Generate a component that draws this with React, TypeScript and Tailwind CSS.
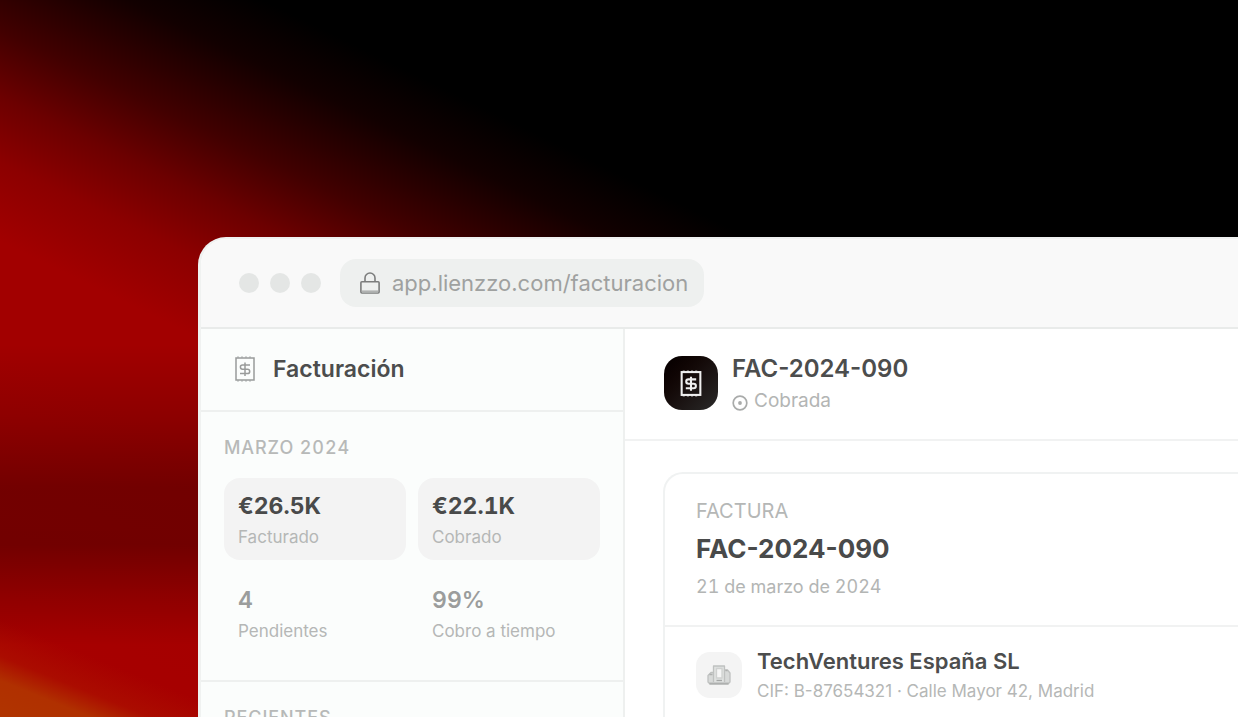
import type { ReactNode } from "react";

type Stat = { value: string; label: string; highlighted: boolean };

const stats: Stat[] = [
  { value: "€26.5K", label: "Facturado", highlighted: true },
  { value: "€22.1K", label: "Cobrado", highlighted: true },
  { value: "4", label: "Pendientes", highlighted: false },
  { value: "99%", label: "Cobro a tiempo", highlighted: false },
];

function LockIcon() {
  return (
    <svg className="h-6 w-5" viewBox="0 0 20 24" fill="none" stroke="#7c7d7d" strokeWidth="1.6" aria-hidden="true">
      <path d="M5 11V7a5 5 0 0 1 10 0v4" />
      <rect x="0.9" y="10.8" width="18.2" height="11.2" rx="1" />
      <path d="M2 20.6h16" stroke="#b0b2b1" strokeWidth="2.4" />
    </svg>
  );
}

function ReceiptIcon({ className, strokeWidth }: { className: string; strokeWidth: number }) {
  return (
    <svg className={className} viewBox="0 0 20 26" fill="none" stroke="currentColor" strokeWidth={strokeWidth} aria-hidden="true">
      <rect x="1" y="2" width="18" height="22" />
      <path d="M2 1h16M2 25h16" strokeWidth="1.2" strokeDasharray="2 2" opacity="0.7" />
      <path d="M15 9H7.500a2 2 0 0 0 0 4.200h5a2.200 2.200 0 0 1 0 4.400H5M10 6.500v13.500" />
    </svg>
  );
}

function StatusIcon() {
  return (
    <svg className="mt-1 h-4 w-4" viewBox="0 0 16 16" aria-hidden="true">
      <circle cx="8" cy="8" r="6.8" fill="none" stroke="#a9abaa" strokeWidth="1.7" />
      <circle cx="8" cy="8" r="1.9" fill="#a9abaa" />
    </svg>
  );
}

function BuildingIcon() {
  return (
    <svg className="h-5 w-6" viewBox="0 0 24 20" fill="none" stroke="#bfc1c0" strokeWidth="1.3" strokeLinejoin="round" aria-hidden="true">
      <path d="M6.5 7.500H4L1 10.500V17l2 2h18l2-2V8L20.500 5H17.500" fill="#d8dad9" />
      <path d="M6.500 17V1h11v16" fill="#dfe1e0" />
      <path d="M9.500 3.500h5.500v9.500H9.500z" fill="#f6f6f6" stroke="#cfd1d0" />
      <path d="M9.500 15.500h5.500" stroke="#a4a6a5" />
      <path d="M18.500 5.500h2M2.500 9.500h3" stroke="#aeb0af" />
      <path d="M2.500 18.500h19" stroke="#aeb0af" strokeWidth="1.8" />
    </svg>
  );
}

function SectionLabel({ children }: { children: ReactNode }) {
  return <h2 className="text-[18px] leading-6 font-medium tracking-wider text-[#b7b9b8] tabular-nums">{children}</h2>;
}

function StatCard({ value, label, highlighted }: Stat) {
  return (
    <div className={highlighted ? "rounded-2xl bg-[#f3f3f3] px-[14px] pt-3 pb-[10px]" : "px-[14px] pt-3 pb-[10px]"}>
      <p
        className={
          highlighted
            ? "text-[23px] leading-8 font-bold text-[#494a4a] tabular-nums"
            : "text-[23px] leading-8 font-semibold text-[#9b9d9c] tabular-nums"
        }
      >
        {value}
      </p>
      <p className="mt-[2px] text-[17px] leading-[26px] text-[#b5b7b6]">{label}</p>
    </div>
  );
}

function Sidebar() {
  return (
    <aside className="w-[424px] shrink-0 border-r-2 border-[#eef0ef] bg-[#fbfdfc]">
      <header className="flex h-[83px] items-center gap-[18px] border-b-2 border-[#eef0ef] px-[34px] pb-[2px]">
        <ReceiptIcon className="h-[26px] w-5 text-[#999b9a]" strokeWidth={1.5} />
        <h1 className="text-[23px] leading-8 font-semibold text-[#4c4d4d]">Facturación</h1>
      </header>
      <section className="border-b-2 border-[#eef0ef] px-[23px] pt-6 pb-[26px]">
        <SectionLabel>MARZO 2024</SectionLabel>
        <div className="mt-[18px] grid grid-cols-2 gap-3">
          {stats.map((stat) => (
            <StatCard key={stat.label} {...stat} />
          ))}
        </div>
      </section>
      <section className="px-[23px] pt-6">
        <SectionLabel>RECIENTES</SectionLabel>
      </section>
    </aside>
  );
}

function Invoice() {
  return (
    <main className="min-w-0 flex-1 bg-white">
      <header className="flex h-28 items-center gap-[14px] border-b-2 border-[#f1f2f2] pb-[2px] pl-[39px]">
        <div className="flex h-[54px] w-[54px] items-center justify-center rounded-[18px] bg-linear-to-br from-[#050000] to-[#2a2a2a] text-[#efefef]">
          <ReceiptIcon className="h-[27px] w-[22px]" strokeWidth={2} />
        </div>
        <div>
          <h2 className="text-[24px] leading-9 font-semibold text-[#4c4d4d]">FAC-2024-090</h2>
          <p className="flex items-center gap-[6px] text-[19px] leading-7 text-[#b3b5b4]">
            <StatusIcon />
            Cobrada
          </p>
        </div>
      </header>
      <article className="mt-[31px] ml-[38px] rounded-tl-[20px] border-t-2 border-l-2 border-[#f0f2f2] pb-10">
        <header className="border-b-2 border-[#f1f2f2] px-[31px] pt-[23px] pb-6">
          <p className="text-[20px] leading-7 text-[#b5b7b6]">FACTURA</p>
          <h3 className="mt-[6px] text-[26px] leading-9 font-bold text-[#494a4a]">FAC-2024-090</h3>
          <p className="mt-[6px] text-[18px] leading-7 text-[#b3b5b4] tabular-nums">21 de marzo de 2024</p>
        </header>
        <div className="flex items-center gap-[15px] px-[31px] pt-[18px]">
          <div className="flex h-[46px] w-[46px] shrink-0 items-center justify-center rounded-[14px] bg-[#f4f4f4]">
            <BuildingIcon />
          </div>
          <div>
            <h4 className="text-[22px] leading-8 font-semibold text-[#4c4d4d]">TechVentures España SL</h4>
            <p className="text-[17px] leading-7 text-[#b5b7b6]">CIF: B-87654321 · Calle Mayor 42, Madrid</p>
          </div>
        </div>
      </article>
    </main>
  );
}

function TitleBar() {
  return (
    <div className="flex h-[90px] items-center gap-[19px] border-b-2 border-[#e9ebea] bg-[#f9f9f9] pl-[38px]">
      <div className="flex gap-[11px]">
        <span className="h-5 w-5 rounded-full bg-[#e4e6e5]" />
        <span className="h-5 w-5 rounded-full bg-[#e4e6e5]" />
        <span className="h-5 w-5 rounded-full bg-[#e4e6e5]" />
      </div>
      <div className="flex h-12 items-center gap-3 rounded-2xl bg-[#eef0ef] pr-4 pl-5">
        <LockIcon />
        <span className="text-[22px] leading-8 text-[#9fa1a0]">app.lienzzo.com/facturacion</span>
      </div>
    </div>
  );
}

export default function App() {
  return (
    <div className="h-screen overflow-hidden bg-black bg-[linear-gradient(180deg,transparent_48%,rgb(0_0_0/0.13)_58%,rgb(0_0_0/0.3)_68%,rgb(0_0_0/0.31)_76%,rgb(0_0_0/0.14)_83%,transparent_90%),linear-gradient(22deg,#b03400_0%,#b03000_3%,rgb(174_24_0/0.5)_5%,rgb(168_0_0/0)_8%),linear-gradient(206deg,#000_36%,#120000_41%,#420000_48%,#6c0000_53%,#8c0000_58%,#a20000_64%,#a20000_72%,#a80000_100%)] pt-[237px] pl-[198px] font-['Inter',sans-serif]">
      <div className="min-h-full overflow-hidden rounded-tl-[28px] border-t-2 border-l-3 border-[#f0f2f1] bg-white">
        <TitleBar />
        <div className="flex">
          <Sidebar />
          <Invoice />
        </div>
      </div>
    </div>
  );
}
